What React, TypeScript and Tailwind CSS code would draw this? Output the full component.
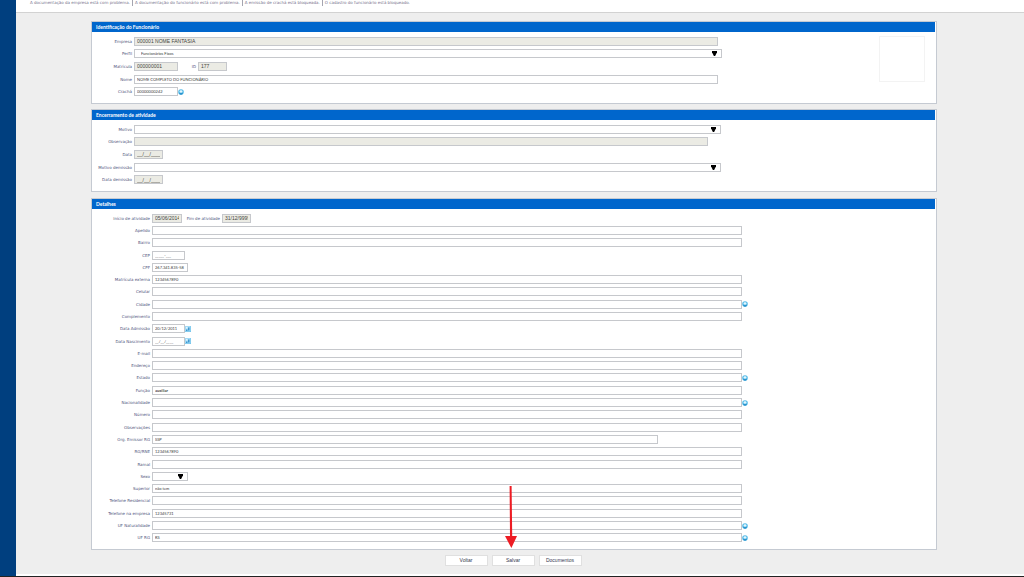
import { useId } from "react";
import type { ReactNode } from "react";

const LABEL =
  "shrink-0 whitespace-nowrap text-right font-['DejaVu_Sans',sans-serif] text-[4px] leading-[9px] text-[#50557c]";
const FIELD =
  "h-[9px] min-w-0 rounded-none border border-[#c6c8cc] px-[2px] py-0 leading-[7px] outline-none";
const EDITABLE = "bg-white text-[4px] text-[#3c3c3c]";
const LOCKED = "bg-[#ebebe4] font-['Liberation_Sans',sans-serif] text-[5px] text-[#45453c]";

function Search({ label }: { label: string }) {
  return (
    <button type="button" aria-label={label} className="flex size-[6px] shrink-0 items-center justify-center">
      <svg viewBox="0 0 12 12" className="size-[6px]" aria-hidden="true">
        <circle cx="6" cy="6" r="5.6" fill="#55bbe8" />
        <path d="M2 9.5a5.6 5.6 0 0 0 8 0L8 7H4z" fill="#2b93cc" />
        <ellipse cx="6" cy="5" rx="2.9" ry="2.4" fill="#e2f6fe" />
      </svg>
    </button>
  );
}

function Calendar({ label }: { label: string }) {
  return (
    <button type="button" aria-label={label} className="flex h-[7px] w-[6px] shrink-0 items-center">
      <svg viewBox="0 0 12 12" className="size-[6px]" aria-hidden="true">
        <rect width="12" height="12" fill="#a2daf6" />
        <path d="M2 7h3v3H2zM6 3h3v6H6z" fill="#3f97d0" />
        <path d="M2 2h3v3H2z" fill="#e4f6ff" />
        <path d="M0 11h12v1H0zM11 0h1v12h-1z" fill="#6abfe8" />
      </svg>
    </button>
  );
}

type Kind = "text" | "locked" | "select";

interface Item {
  label: string;
  value?: string;
  kind?: Kind;
  width?: string;
  end?: string;
  icon?: "search" | "calendar";
  bold?: boolean;
  extra?: { label: string; value: string; width: string };
}

function Control({ id, item }: { id: string; item: Item }) {
  const size = item.width ?? "flex-1";
  if (item.kind === "select") {
    return (
      <span className={`relative flex min-w-0 ${size}`}>
        <select id={id} className={`${FIELD} ${EDITABLE} w-full appearance-none pl-[6px]`}>
          <option>{item.value ?? ""}</option>
        </select>
        <svg
          viewBox="0 0 12 12"
          className="pointer-events-none absolute top-[2px] right-[5px] size-[5px]"
          aria-hidden="true"
        >
          <path d="M0 0h12v3L7.5 12h-3L0 3z" fill="#000" />
        </svg>
      </span>
    );
  }
  return (
    <input
      id={id}
      type="text"
      defaultValue={item.value ?? ""}
      readOnly={item.kind === "locked"}
      className={`${FIELD} ${item.kind === "locked" ? LOCKED : EDITABLE} ${size} ${item.bold ? "font-bold" : ""}`}
    />
  );
}

function Row({ item, labelWidth }: { item: Item; labelWidth: string }) {
  const id = useId();
  const extraId = useId();
  return (
    <div className={`flex min-w-0 items-center ${item.end ?? ""}`}>
      <label htmlFor={id} className={`${LABEL} ${labelWidth} mr-[2px]`}>
        {item.label}
      </label>
      <Control id={id} item={item} />
      {item.extra && (
        <>
          <label htmlFor={extraId} className={`${LABEL} ${item.extra.width} mr-[2px]`}>
            {item.extra.label}
          </label>
          <input
            id={extraId}
            type="text"
            readOnly
            defaultValue={item.extra.value}
            className={`${FIELD} ${LOCKED} w-[29px]`}
          />
        </>
      )}
      <span className="flex w-2 shrink-0 items-center">
        {item.icon === "search" && <Search label={`Pesquisar ${item.label}`} />}
        {item.icon === "calendar" && <Calendar label={`Calendário ${item.label}`} />}
      </span>
    </div>
  );
}

function Panel({ title, className, children }: { title: string; className?: string; children: ReactNode }) {
  return (
    <section className={`flex flex-col border border-[#c5cad2] bg-white ${className ?? ""}`}>
      <h2 className="mr-px h-[10px] bg-[#0066cc] pl-1 text-[5px] leading-[10px] font-bold text-white">{title}</h2>
      {children}
    </section>
  );
}

const notices = [
  "A documentação da empresa está com problema.",
  "A documentação do funcionário está com problema.",
  "A emissão de crachá está bloqueada.",
  "O cadastro do funcionário está bloqueado.",
];

const identification: Item[] = [
  { label: "Empresa", value: "000001 NOME FANTASIA", kind: "locked", end: "pr-[153px]" },
  { label: "Perfil", value: "Funcionários Fixos", kind: "select", end: "pr-[149px]" },
  {
    label: "Matrícula",
    value: "000000001",
    kind: "locked",
    width: "w-11",
    extra: { label: "ID", value: "177", width: "w-[18px]" },
  },
  { label: "Nome", value: "NOME COMPLETO DO FUNCIONÁRIO", end: "pr-[153px]" },
  { label: "Crachá", value: "00000000242", width: "w-11", icon: "search" },
];

const closing: Item[] = [
  { label: "Motivo", kind: "select", end: "pr-[207px]" },
  { label: "Observação", kind: "locked", end: "pr-[220px]" },
  { label: "Data", value: "__/__/____", kind: "locked", width: "w-[29px]" },
  { label: "Motivo demissão", kind: "select", end: "pr-[207px]" },
  { label: "Data demissão", value: "__/__/____", kind: "locked", width: "w-[29px]" },
];

const details: Item[] = [
  {
    label: "Início de atividade",
    value: "05/06/2014",
    kind: "locked",
    width: "w-[30px]",
    extra: { label: "Fim de atividade", value: "31/12/9999", width: "w-[38px]" },
  },
  { label: "Apelido" },
  { label: "Bairro" },
  { label: "CEP", value: "_____-___", width: "w-[33px]" },
  { label: "CPF", value: "267.341.835-58", width: "w-9" },
  { label: "Matrícula externa", value: "1234567890" },
  { label: "Celular" },
  { label: "Cidade", icon: "search" },
  { label: "Complemento" },
  { label: "Data Admissão", value: "20/12/2011", width: "w-[33px]", icon: "calendar" },
  { label: "Data Nascimento", value: "__/__/____", width: "w-[33px]", icon: "calendar" },
  { label: "E-mail" },
  { label: "Endereço" },
  { label: "Estado", icon: "search" },
  { label: "Função", value: "auxiliar", bold: true },
  { label: "Nacionalidade", icon: "search" },
  { label: "Número" },
  { label: "Observações" },
  { label: "Org. Emissor RG", value: "SSP", end: "pr-[84px]" },
  { label: "RG/RNE", value: "1234567890" },
  { label: "Ramal" },
  { label: "Sexo", kind: "select", width: "w-9" },
  { label: "Superior", value: "não tem" },
  { label: "Telefone Residencial" },
  { label: "Telefone na empresa", value: "12345731" },
  { label: "UF Naturalidade", icon: "search" },
  { label: "UF RG", value: "RS", icon: "search" },
];

const BUTTON =
  "h-[11px] w-[43px] border border-[#e0e0e0] bg-white text-center font-['Liberation_Sans',sans-serif] text-[5px] leading-[9px] text-[#33384f]";

export default function App() {
  return (
    <div className="flex min-h-screen border-b border-[#222] bg-[#eeeeee] font-['Lato','Liberation_Sans',sans-serif]">
      <aside className="w-4 shrink-0 bg-[#003f7f]" />
      <div className="flex min-w-0 flex-1 flex-col">
        <header className="h-[13px] border-b border-[#d2d2d2] bg-white pl-[14px]">
          <ul className="flex font-['DejaVu_Sans',sans-serif] text-[4px] leading-[6px] whitespace-nowrap text-[#77738c]">
            {notices.map((notice, i) => (
              <li key={notice} className={i > 0 ? "ml-[2px] border-l border-[#a5a5b0] pl-[2px]" : ""}>
                {notice}
              </li>
            ))}
          </ul>
        </header>

        <main className="flex flex-1 flex-col pt-2 pr-[87px] pl-[75px]">
          <Panel title="Identificação do Funcionário">
            <div className="flex items-start pt-[3px] pb-[5px]">
              <div className="grid h-[63px] min-w-0 flex-1 auto-rows-fr">
                {identification.map((item) => (
                  <Row key={item.label} item={item} labelWidth="w-10" />
                ))}
              </div>
              <div className="mt-px mr-[11px] size-[46px] shrink-0 border border-[#f3f3f3]" />
            </div>
          </Panel>

          <Panel title="Encerramento de atividade" className="mt-[5px]">
            <div className="grid h-[71px] auto-rows-fr pt-[3px] pb-[5px]">
              {closing.map((item) => (
                <Row key={item.label} item={item} labelWidth="w-10" />
              ))}
            </div>
          </Panel>

          <Panel title="Detalhes" className="mt-[6px] flex-1">
            <div className="grid flex-1 auto-rows-fr pt-[3px] pr-[186px] pb-[5px]">
              {details.map((item) => (
                <Row key={item.label} item={item} labelWidth="w-[58px]" />
              ))}
            </div>
          </Panel>

          <div className="flex justify-center gap-1 pt-[5px] pr-[2px] pb-2">
            <button type="button" className={BUTTON}>
              Voltar
            </button>
            <div className="relative flex">
              <svg
                viewBox="0 0 12 62"
                className="pointer-events-none absolute bottom-full left-[13px] mb-[7px] h-[62px] w-3"
                aria-hidden="true"
              >
                <path d="M4.6 0h2l.6 50H12L6.4 62 0 50h5z" fill="#ed1c24" />
              </svg>
              <button type="button" className={BUTTON}>
                Salvar
              </button>
            </div>
            <button type="button" className={BUTTON}>
              Documentos
            </button>
          </div>
          <div className="-mr-[87px] -ml-[75px] h-[2px] bg-white" />
        </main>
      </div>
    </div>
  );
}
